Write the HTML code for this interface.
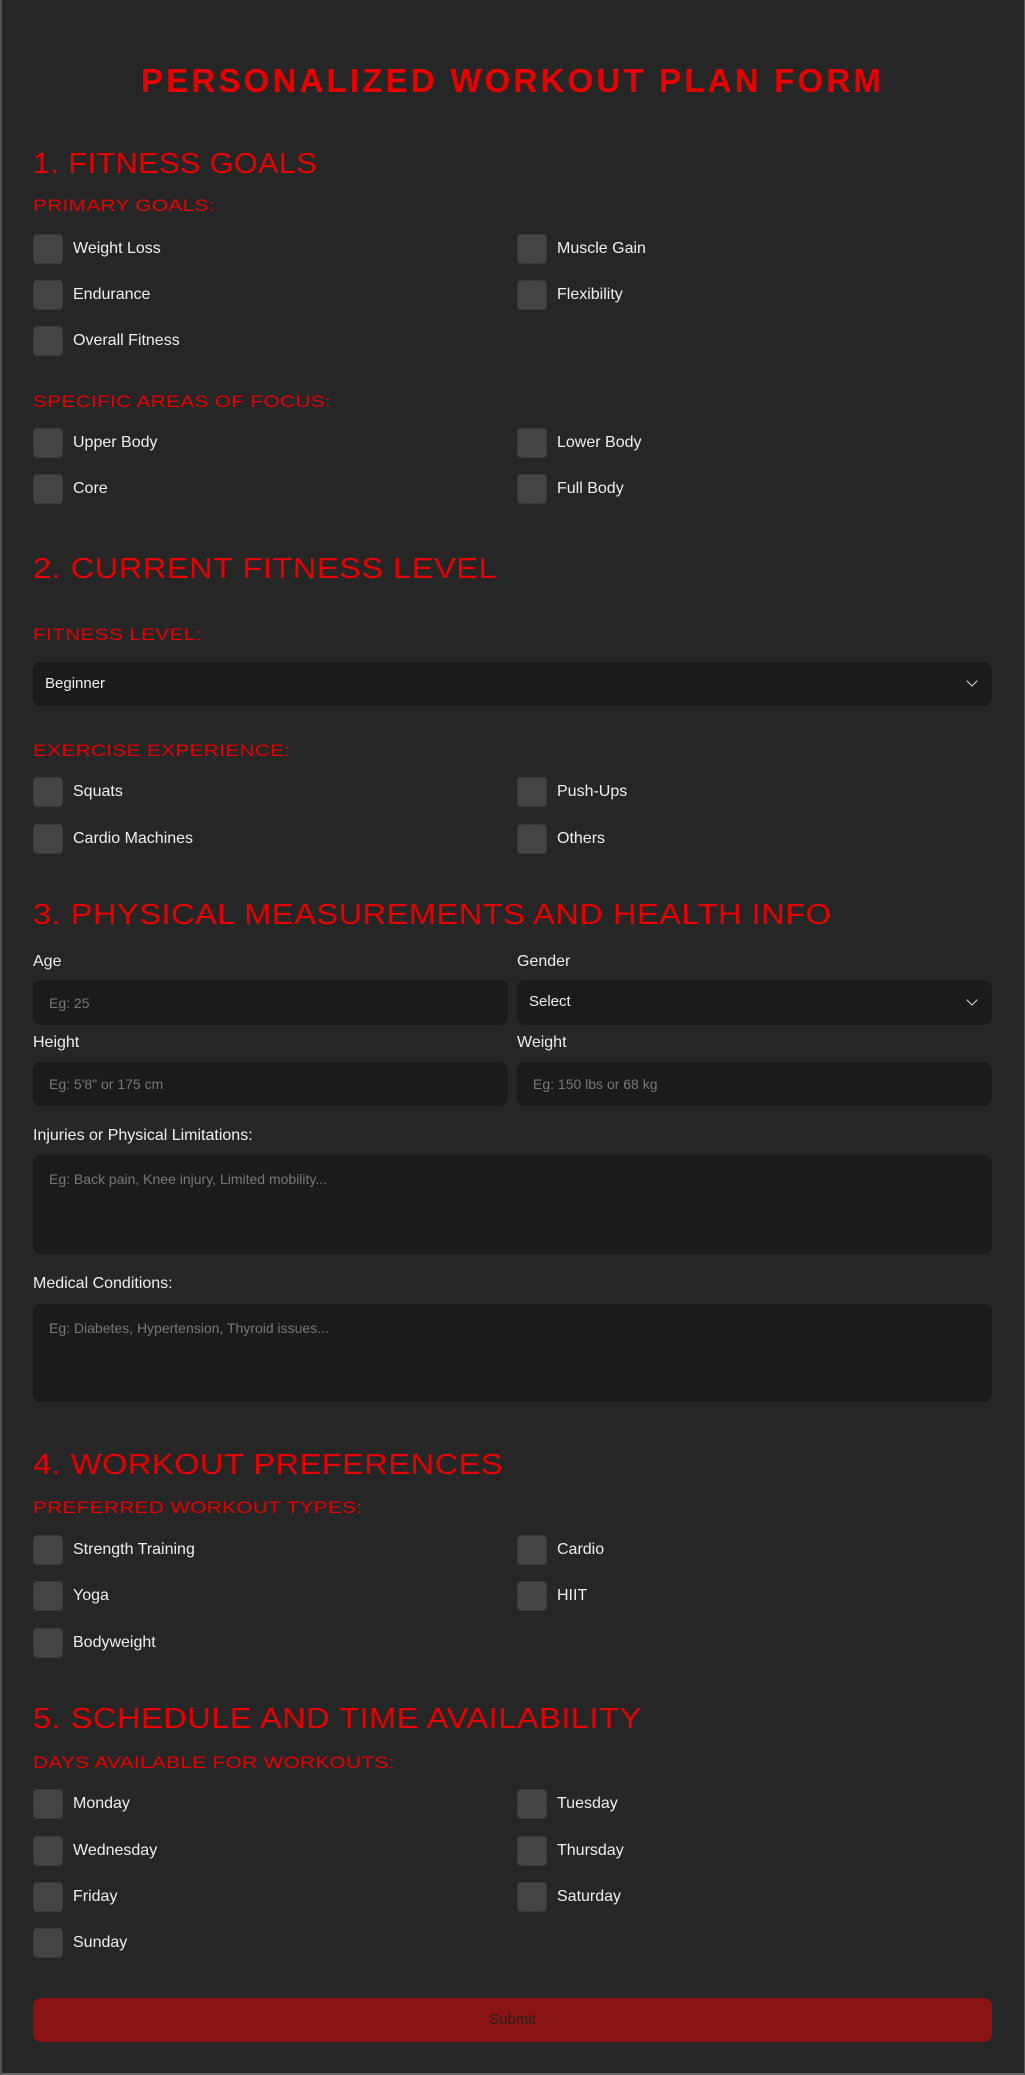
<!DOCTYPE html>
<html><head><meta charset="utf-8"><style>
*{margin:0;padding:0;box-sizing:border-box}
html,body{width:1025px;height:2075px;background:#262626;overflow:hidden}
body{position:relative;font-family:"Liberation Sans",sans-serif}
.frame{position:absolute;left:0;top:0;width:1025px;height:2075px;border-left:2px solid #555;border-right:1px solid #555;border-bottom:2px solid #666;pointer-events:none}
.a{position:absolute;white-space:nowrap}
.title{left:0;width:1025px;text-align:center;top:62px;font-size:33px;line-height:38px;font-weight:bold;color:#e60000;letter-spacing:3.2px}
.h{left:33px;font-size:29px;line-height:34px;color:#e60000;letter-spacing:0.5px;transform:scaleX(1.12);transform-origin:left}
.s{left:33px;font-size:17px;line-height:20px;color:#e60000;letter-spacing:0.3px;transform:scaleX(1.22);transform-origin:left}
.cb{position:absolute;width:30px;height:30px;background:#444;border:1px solid #3a3a3a;border-radius:4px}
.l{position:absolute;font-size:16px;line-height:20px;color:#eee}
.lab{left:33px;font-size:16px;line-height:20px;color:#eee}
.in{position:absolute;background:#1b1b1b;border-radius:8px}
.ph{position:absolute;font-size:14px;color:#777;line-height:18px}
.chev{position:absolute;width:8px;height:8px;border-right:1.5px solid #ddd;border-bottom:1.5px solid #ddd;transform:rotate(45deg)}
</style></head><body>
<div class="a title">PERSONALIZED WORKOUT PLAN FORM</div>

<div class="a h" style="top:147px;transform:scaleX(1.05)">1. FITNESS GOALS</div>
<div class="a s" style="top:196px">PRIMARY GOALS:</div>
<div class="cb" style="left:33px;top:234px"></div><div class="l" style="left:73px;top:239px">Weight Loss</div>
<div class="cb" style="left:517px;top:234px"></div><div class="l" style="left:557px;top:239px">Muscle Gain</div>
<div class="cb" style="left:33px;top:280px"></div><div class="l" style="left:73px;top:285px">Endurance</div>
<div class="cb" style="left:517px;top:280px"></div><div class="l" style="left:557px;top:285px">Flexibility</div>
<div class="cb" style="left:33px;top:326px"></div><div class="l" style="left:73px;top:331px">Overall Fitness</div>
<div class="a s" style="top:392px">SPECIFIC AREAS OF FOCUS:</div>
<div class="cb" style="left:33px;top:428px"></div><div class="l" style="left:73px;top:433px">Upper Body</div>
<div class="cb" style="left:517px;top:428px"></div><div class="l" style="left:557px;top:433px">Lower Body</div>
<div class="cb" style="left:33px;top:474px"></div><div class="l" style="left:73px;top:479px">Core</div>
<div class="cb" style="left:517px;top:474px"></div><div class="l" style="left:557px;top:479px">Full Body</div>

<div class="a h" style="top:552px">2. CURRENT FITNESS LEVEL</div>
<div class="a s" style="top:625px">FITNESS LEVEL:</div>
<div class="in" style="left:33px;top:662px;width:959px;height:44px"></div>
<div class="l" style="left:45px;top:674px;font-size:15px">Beginner</div>
<div class="chev" style="left:968px;top:677px"></div>
<div class="a s" style="top:741px">EXERCISE EXPERIENCE:</div>
<div class="cb" style="left:33px;top:777px"></div><div class="l" style="left:73px;top:782px">Squats</div>
<div class="cb" style="left:517px;top:777px"></div><div class="l" style="left:557px;top:782px">Push-Ups</div>
<div class="cb" style="left:33px;top:824px"></div><div class="l" style="left:73px;top:829px">Cardio Machines</div>
<div class="cb" style="left:517px;top:824px"></div><div class="l" style="left:557px;top:829px">Others</div>

<div class="a h" style="top:898px">3. PHYSICAL MEASUREMENTS AND HEALTH INFO</div>
<div class="a lab" style="top:952px">Age</div>
<div class="a lab" style="left:517px;top:952px">Gender</div>
<div class="in" style="left:33px;top:980px;width:475px;height:45px"></div>
<div class="ph" style="left:49px;top:994px">Eg: 25</div>
<div class="in" style="left:517px;top:980px;width:475px;height:45px"></div>
<div class="l" style="left:529px;top:992px;font-size:15px">Select</div>
<div class="chev" style="left:968px;top:996px"></div>
<div class="a lab" style="top:1033px">Height</div>
<div class="a lab" style="left:517px;top:1033px">Weight</div>
<div class="in" style="left:33px;top:1062px;width:475px;height:44px"></div>
<div class="ph" style="left:49px;top:1075px">Eg: 5'8" or 175 cm</div>
<div class="in" style="left:517px;top:1062px;width:475px;height:44px"></div>
<div class="ph" style="left:533px;top:1075px">Eg: 150 lbs or 68 kg</div>
<div class="a lab" style="top:1126px">Injuries or Physical Limitations:</div>
<div class="in" style="left:33px;top:1155px;width:959px;height:99px"></div>
<div class="ph" style="left:49px;top:1170px">Eg: Back pain, Knee injury, Limited mobility...</div>
<div class="a lab" style="top:1274px">Medical Conditions:</div>
<div class="in" style="left:33px;top:1304px;width:959px;height:98px"></div>
<div class="ph" style="left:49px;top:1319px">Eg: Diabetes, Hypertension, Thyroid issues...</div>

<div class="a h" style="top:1448px">4. WORKOUT PREFERENCES</div>
<div class="a s" style="top:1498px">PREFERRED WORKOUT TYPES:</div>
<div class="cb" style="left:33px;top:1535px"></div><div class="l" style="left:73px;top:1540px">Strength Training</div>
<div class="cb" style="left:517px;top:1535px"></div><div class="l" style="left:557px;top:1540px">Cardio</div>
<div class="cb" style="left:33px;top:1581px"></div><div class="l" style="left:73px;top:1586px">Yoga</div>
<div class="cb" style="left:517px;top:1581px"></div><div class="l" style="left:557px;top:1586px">HIIT</div>
<div class="cb" style="left:33px;top:1628px"></div><div class="l" style="left:73px;top:1633px">Bodyweight</div>

<div class="a h" style="top:1702px">5. SCHEDULE AND TIME AVAILABILITY</div>
<div class="a s" style="top:1753px">DAYS AVAILABLE FOR WORKOUTS:</div>
<div class="cb" style="left:33px;top:1789px"></div><div class="l" style="left:73px;top:1794px">Monday</div>
<div class="cb" style="left:517px;top:1789px"></div><div class="l" style="left:557px;top:1794px">Tuesday</div>
<div class="cb" style="left:33px;top:1836px"></div><div class="l" style="left:73px;top:1841px">Wednesday</div>
<div class="cb" style="left:517px;top:1836px"></div><div class="l" style="left:557px;top:1841px">Thursday</div>
<div class="cb" style="left:33px;top:1882px"></div><div class="l" style="left:73px;top:1887px">Friday</div>
<div class="cb" style="left:517px;top:1882px"></div><div class="l" style="left:557px;top:1887px">Saturday</div>
<div class="cb" style="left:33px;top:1928px"></div><div class="l" style="left:73px;top:1933px">Sunday</div>

<div class="in" style="left:33px;top:1998px;width:959px;height:44px;background:#8a1414;"></div>
<div class="a" style="left:33px;width:959px;text-align:center;top:2010px;font-size:15px;line-height:20px;color:#222">Submit</div>
<div class="frame"></div>
</body></html>
